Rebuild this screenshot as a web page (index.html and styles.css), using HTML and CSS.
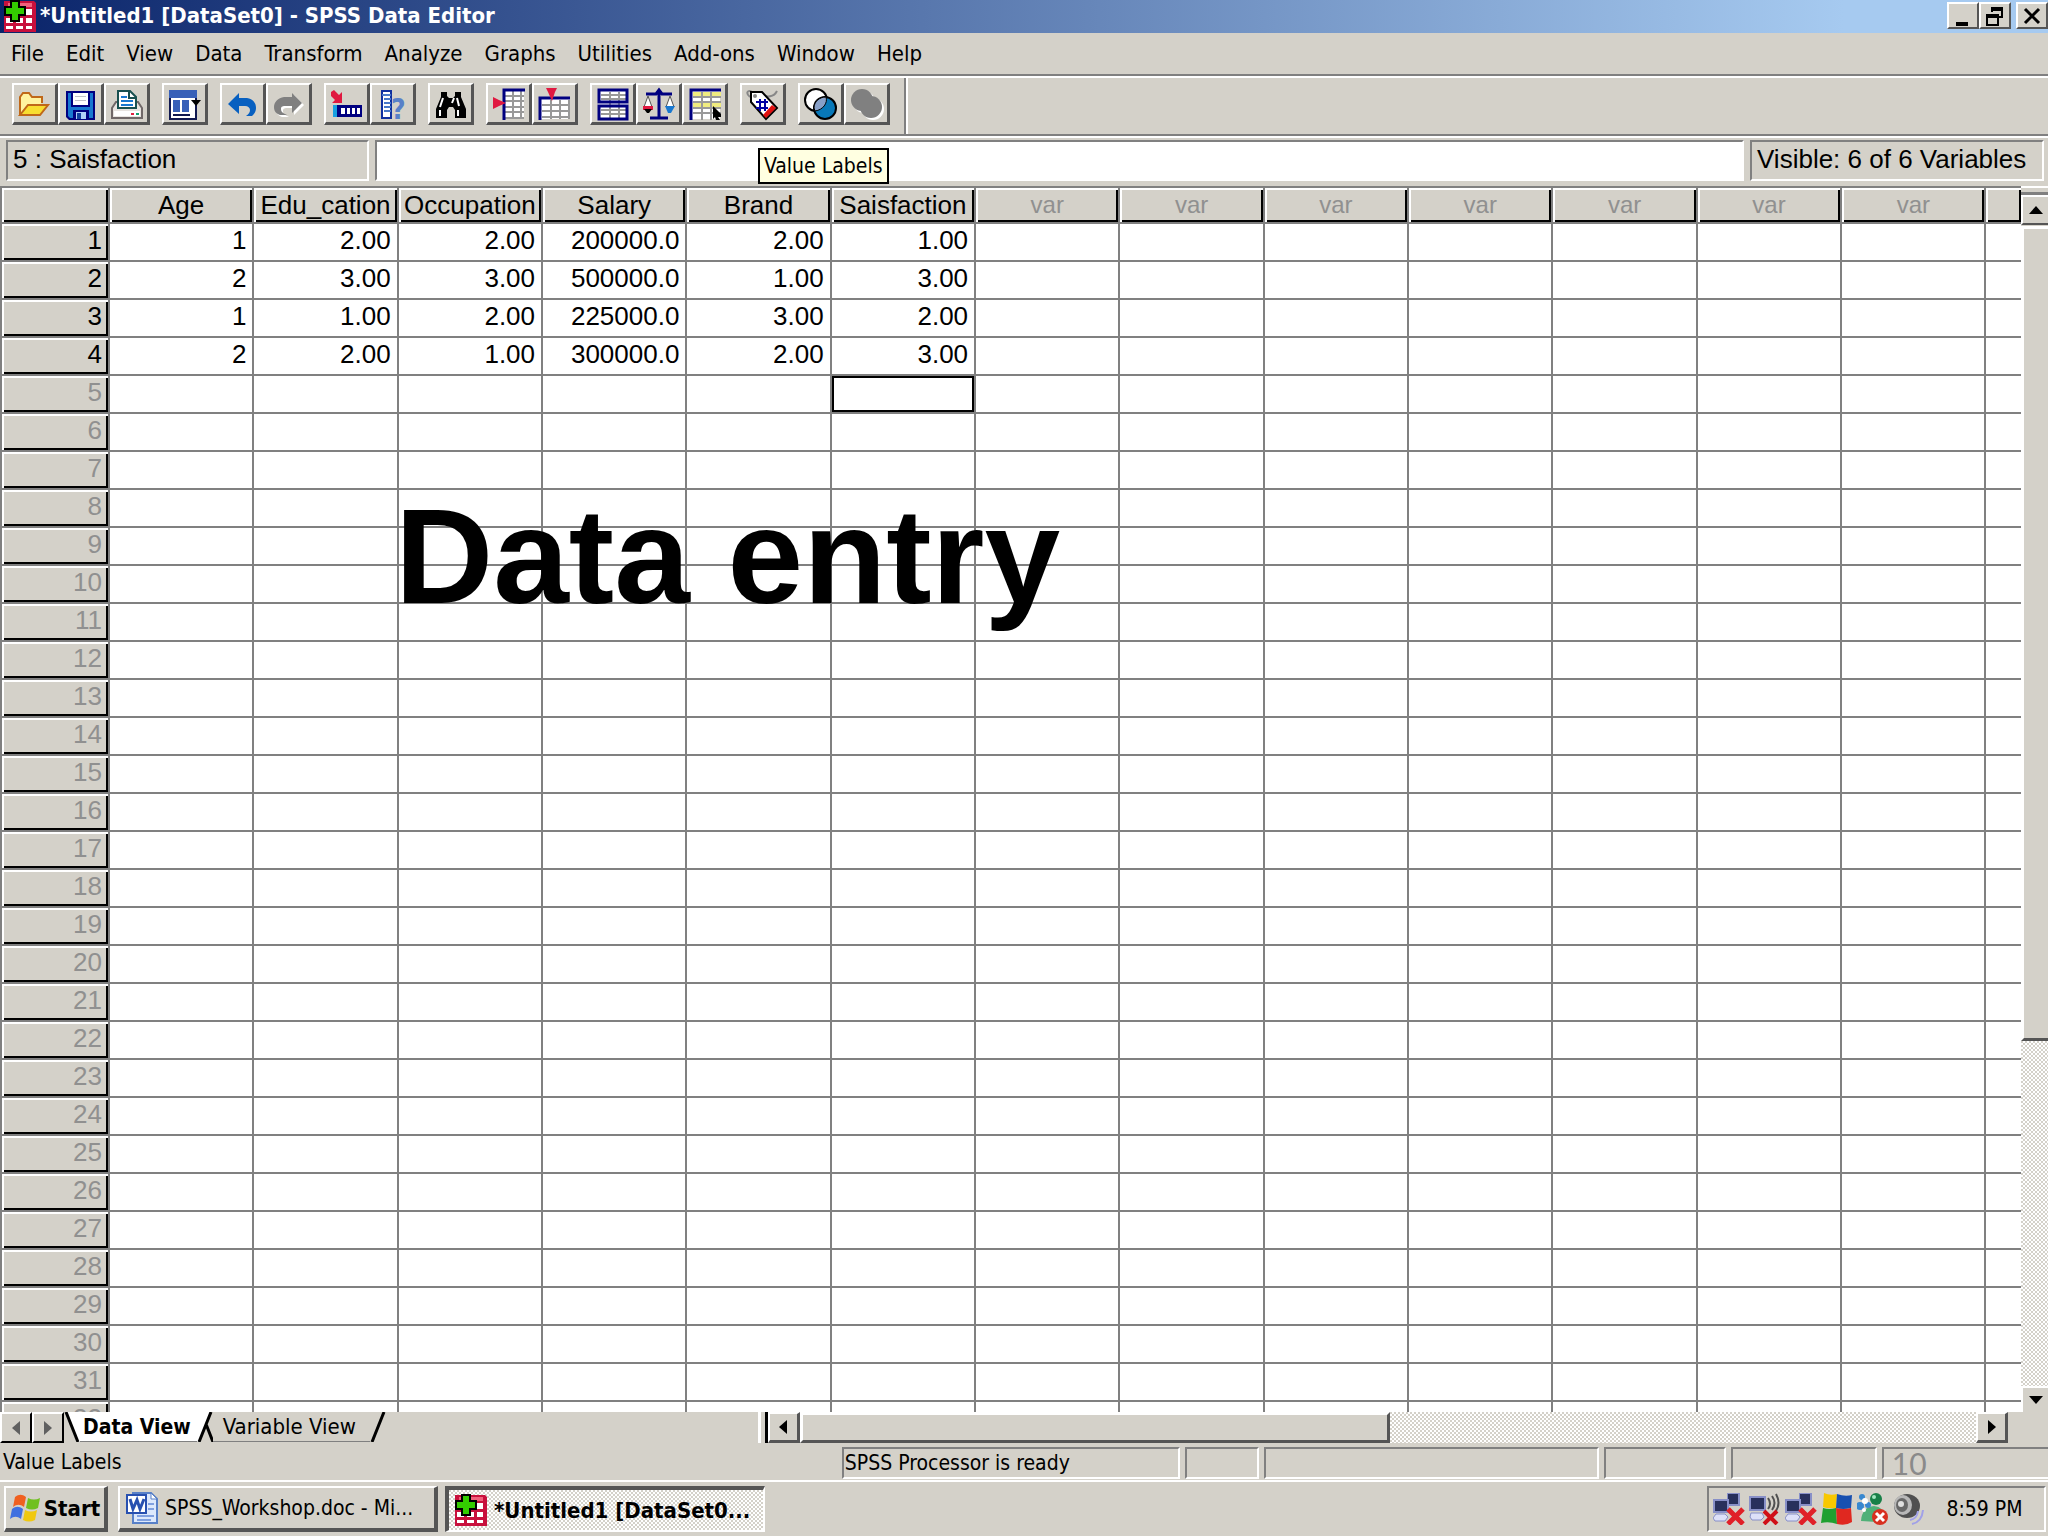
FILE: index.html
```html
<!DOCTYPE html>
<html lang="en">
  <head>
    <title>*Untitled1 [DataSet0] - SPSS Data Editor</title>
    <meta charset="utf-8" />
    <meta name="viewport" content="width=device-width, initial-scale=1.0" />
    <link rel="stylesheet" href="styles.css">
  </head>

  <body>
    <svg class="sprites" width="0" height="0">
      <symbol id="spss" viewBox="0 0 32 32">
        <path fill="#c8103c" d="M0 1h30l2 2v29H0z" />
        <path fill="#f0607c" d="M4 3h24v4H4z" />
        <path fill="#fff" d="M22 9h6v6h-6zM22 18h6v5h-6zM12 18h7v5h-7zM2 18h7v5H2zM2 26h7v3H2zM12 26h7v3h-7zM22 26h6v3h-6z" />
        <path fill="#3c0" stroke="#000" stroke-width="2" d="M7 1h8v6h6v8h-6v6H7v-6H1V7h6z" />
      </symbol>
      <symbol id="net" viewBox="0 0 32 32">
        <path fill="#8890c8" d="M14 0h13v13H14z" />
        <path fill="#28305c" d="M15 1h10v10H15z" />
        <path fill="#8890c8" d="M0 6h16v14H0z" />
        <path fill="#28305c" d="M2 8h12v10H2z" />
        <path fill="#dde0f8" stroke="#8890c8" d="M3 21h9l3 3-3 4H2l-2-3z" />
        <path stroke="#e02028" stroke-width="5" d="M15 16l15 15M30 16L15 31" />
      </symbol>
    </svg>

    <header class="titlebar">
      <svg class="icon"><use href="#spss" /></svg>
      <h1>*Untitled1 [DataSet0] - SPSS Data Editor</h1>
      <div class="window-buttons">
        <button aria-label="Minimize"><svg viewBox="0 0 28 24"><path d="M7 18h12v4H7z" /></svg></button>
        <button aria-label="Restore"><svg viewBox="0 0 28 24"><path fill="none" stroke="#000" stroke-width="2" d="M11 8V4h10v9h-4M10 4h12M10 6h12M6 11h11v10H6zM6 13h11" /></svg></button>
        <button class="close" aria-label="Close"><svg viewBox="0 0 28 24"><path fill="none" stroke="#000" stroke-width="3" d="M7 5l14 14M21 5L7 19" /></svg></button>
      </div>
    </header>

    <nav class="menu">
      <button>File</button>
      <button>Edit</button>
      <button>View</button>
      <button>Data</button>
      <button>Transform</button>
      <button>Analyze</button>
      <button>Graphs</button>
      <button>Utilities</button>
      <button>Add-ons</button>
      <button>Window</button>
      <button>Help</button>
    </nav>

    <div class="toolbar">
      <div class="tools">
        <button aria-label="Open File"><svg viewBox="0 0 32 32"><path fill="#fff3a0" stroke="#c06818" stroke-width="2" d="M1 27V9l3-4h6l3 4h10v6" /><path fill="#f8de30" stroke="#c06818" stroke-width="2" d="M1 27l8-10h20l-8 10z" /></svg></button>
        <button aria-label="Save File"><svg viewBox="0 0 32 32"><path fill="#000080" d="M1 3h29v29H4l-3-3z" /><path fill="#1878d0" d="M3 5h25v25H5l-2-2z" /><path fill="#000080" d="M6 5h19v14H6zM8 22h16v9H8z" /><path fill="#fff" d="M8 5h15v12H8z" /><path fill="#c0c0c8" d="M10 8h11v1H10zM10 12h11v1H10z" /><path fill="#b0d0f8" d="M11 24h10v7H11z" /><path fill="#1040a0" d="M12 25h4v6h-4z" /></svg></button>
        <button aria-label="Print"><svg viewBox="0 0 32 32"><path fill="#e8e4e0" stroke="#706868" stroke-width="2" d="M5 14h22l4 6v10H1V20z" /><path fill="#fff" stroke="#185050" stroke-width="2" d="M7 20V3h12l6 6v11z" /><path fill="none" stroke="#185050" stroke-width="2" d="M18 3v7h7" /><path stroke="#1878d0" stroke-width="2" d="M10 9h6M10 13h12M10 17h12" /><path fill="#fff" d="M3 23h26v5H3z" /><path fill="#e02040" d="M20 25h3v2h-3z" /><path fill="#10a070" d="M25 25h3v2h-3z" /></svg></button>
      </div>
      <div class="tools">
        <button aria-label="Dialog Recall"><svg viewBox="0 0 32 32"><path fill="#fff" stroke="#101850" stroke-width="2" d="M1 4h26v27H1z" /><path fill="#3860b8" d="M0 2h28v8H0zM4 12h7v12H4zM13 12h7v12h-7z" /><path fill="#101850" d="M4 26h17v2H4z" /><path d="M22 12h10l-5 6z" /></svg></button>
      </div>
      <div class="tools">
        <button aria-label="Undo"><svg viewBox="0 0 32 32"><path fill="#0860c0" d="M1 16L12 5v5h8c6 1 9 5 9 10 0 4-2 6-4 8h-6c3-2 4-4 4-6s-2-4-5-4h-6v8z" /></svg></button>
        <button disabled aria-label="Redo"><svg viewBox="0 0 32 32"><path fill="#fff" transform="translate(2 2)" d="M29 15L19 5v4h-8C5 10 1 14 1 19c0 5 3 7 6 8h7c-4-2-6-3-6-6s2-3 5-3h6v7z" /><path fill="#808080" d="M29 15L19 5v4h-8C5 10 1 14 1 19c0 5 3 7 6 8h7c-4-2-6-3-6-6s2-3 5-3h6v7z" /></svg></button>
      </div>
      <div class="tools">
        <button aria-label="Go To Case"><svg viewBox="0 0 32 32"><path fill="#e01840" d="M0 4l3-2 5 5 3-3v11H1l3-3-4-4z" /><path fill="#000080" d="M2 17h29v12H2z" /><path fill="#18a0e0" d="M2 17h4v12H2z" /><path fill="#fff" d="M10 20h4v6h-4zM16 20h3v6h-3zM21 20h3v6h-3zM26 20h3v6h-3z" /></svg></button>
        <button aria-label="Variables"><svg viewBox="0 0 32 32"><path fill="#fff" stroke="#1030a0" stroke-width="2" d="M5 3h9v27H5z" /><path stroke="#4878c8" stroke-width="2" d="M5 7h9M7 11h7M7 15h7M7 19h7M7 23h7" /><text class="mark" x="14" y="31">?</text></svg></button>
      </div>
      <div class="tools">
        <button aria-label="Find"><svg viewBox="0 0 32 32"><path d="M6 4h6v4l2 2h4l2-2V4h6v5l5 12v9H20v-8l-2-3h-4l-2 3v8H1v-9L6 9z" /><path stroke="#fff" stroke-width="2" d="M8 10l-3 9M5 22v6M19 10l-2 5M22 10l2 8M23 22v6" /></svg></button>
      </div>
      <div class="tools">
        <button aria-label="Insert Case"><svg viewBox="0 0 32 32"><path fill="#fff" d="M10 2h21v29H10z" /><path fill="none" stroke="#999" stroke-width="2" d="M12 8h19M12 13h19M12 19h19M12 24h19M12 30h19M20 3v28M28 3v28" /><path fill="none" stroke="#000080" stroke-width="3" d="M11 32V2h21" /><path fill="#e01840" d="M0 9l6 3 7 3-7 3-6 3z" /></svg></button>
        <button aria-label="Insert Variable"><svg viewBox="0 0 32 32"><path fill="#fff" d="M1 10h30v21H1z" /><path fill="none" stroke="#999" stroke-width="2" d="M3 17h28M3 23h28M3 29h28M12 12v19M21 12v19M30 12v19" /><path fill="none" stroke="#000080" stroke-width="3" d="M1 32V10h30" /><path fill="#e01840" d="M7 0h11l-2 4-3 9-4-9z" /></svg></button>
      </div>
      <div class="tools">
        <button aria-label="Split File"><svg viewBox="0 0 32 32"><path fill="#fff" d="M1 2h30v29H1z" /><path fill="none" stroke="#999" stroke-width="2" d="M4 7h26M4 11h26M4 22h26M4 26h26M13 4v26M22 4v26" /><path fill="none" stroke="#000080" stroke-width="3" d="M2 2h28v12H2zM2 18h28v13H2z" /></svg></button>
        <button aria-label="Weight Cases"><svg viewBox="0 0 32 32"><path fill="none" stroke="#000080" stroke-width="3" d="M3 6h10l3-4 3 4h10M16 3v26M7 30h18" /><path fill="#fff" stroke="#555" stroke-width="1" d="M5 8L1 19h8zM27 8l-4 11h8z" /><path fill="#e01840" d="M0 18h10v4H0z" /><path d="M1 21h8l-3 4H4z" /><path fill="#1878d0" d="M22 18h10l-4 7h-3z" /></svg></button>
        <button aria-label="Select Cases"><svg viewBox="0 0 32 32"><path fill="#fff" d="M1 2h30v29H1z" /><path fill="#f0ec80" d="M4 4h28v5H4zM4 15h28v5H4z" /><path fill="none" stroke="#999" stroke-width="2" d="M4 9h28M4 14h28M4 20h28M4 25h28M13 4v28M22 4v28" /><path fill="none" stroke="#000080" stroke-width="3" d="M2 32V2h30" /><path d="M24 18l8 8v3h-3l2 3h-4l-1-3-2 2z" /></svg></button>
      </div>
      <div class="tools">
        <button aria-label="Value Labels"><svg viewBox="0 0 32 32"><path fill="none" stroke="#888" stroke-width="2" d="M5 4C1 1-2 5 3 9M14 6c6 4 13 3 16-3" /><path fill="#fff" stroke="#000" stroke-width="2" d="M4 4h11l15 16-11 11L4 14z" /><path fill="#e01010" d="M16 27l9-10 4 3-10 10z" /><circle cx="8" cy="8" r="2" fill="#888" /><path stroke="#0000a0" stroke-width="2" d="M13 11v12M18 11v12M9 14h12M9 20h12" /></svg></button>
        <div class="tooltip" role="tooltip">Value Labels</div>
      </div>
      <div class="tools">
        <button aria-label="Use Sets"><svg viewBox="0 0 32 32"><circle cx="11" cy="12" r="11" fill="#fff" stroke="#000" stroke-width="2" /><circle cx="20" cy="20" r="11" fill="#0878b8" stroke="#000" stroke-width="2" /><path fill="#88a0c8" stroke="#000" d="M9 20c0-6 5-11 12-11 2 6-3 13-11 14z" /></svg></button>
        <button disabled aria-label="Show All Variables"><svg viewBox="0 0 32 32"><g fill="#fff"><circle cx="13" cy="14" r="11" /><circle cx="22" cy="21" r="11" /></g><g fill="#808080"><circle cx="11" cy="12" r="11" /><circle cx="20" cy="19" r="11" /></g></svg></button>
      </div>
      <div class="separator"></div>
    </div>

    <div class="cellbar">
      <label class="cell-name" for="cellValue">5 : Saisfaction</label>
      <input type="text" id="cellValue" />
      <div class="visible">Visible: 6 of 6 Variables</div>
    </div>

    <main class="workspace">
      <div class="grid">
        <table>
          <thead>
            <tr id="columns"></tr>
          </thead>
          <tbody id="cases"></tbody>
        </table>
        <div class="caption">Data entry</div>
      </div>
      <div class="vscroll">
        <div class="splitter"></div>
        <button aria-label="Scroll up"><svg viewBox="0 0 16 10"><path d="M8 1l7 8H1z" /></svg></button>
        <div class="thumb"></div>
        <div class="track"></div>
        <button class="down" aria-label="Scroll down"><svg viewBox="0 0 16 10"><path d="M8 9l7-8H1z" /></svg></button>
      </div>
    </main>

    <div class="views">
      <div class="tabs">
        <button class="arrow" aria-label="Previous view"><svg viewBox="0 0 10 16"><path fill="#606060" d="M1 8l8-7v14z" /></svg></button>
        <button class="arrow" aria-label="Next view"><svg viewBox="0 0 10 16"><path fill="#606060" d="M9 8L1 1v14z" /></svg></button>
        <svg class="edge" viewBox="0 0 16 30"><path fill="#fff" d="M2 0h14v30h-2z" /><path stroke="#000" stroke-width="3" d="M2 0l12 30" /></svg>
        <button class="tab active">Data View</button>
        <svg class="edge" viewBox="0 0 16 30"><path fill="#fff" d="M0 0h14L2 30H0z" /><path stroke="#000" stroke-width="3" d="M14 0L2 30M9 12l7 18" /></svg>
        <button class="tab">Variable View</button>
        <svg class="edge" viewBox="0 0 16 30"><path stroke="#000" stroke-width="3" d="M14 0L2 30" /></svg>
      </div>
      <div class="hscroll">
        <div class="splitter"></div>
        <button aria-label="Scroll left"><svg viewBox="0 0 10 16"><path d="M1 8l8-7v14z" /></svg></button>
        <div class="thumb"></div>
        <div class="track"></div>
        <button aria-label="Scroll right"><svg viewBox="0 0 10 16"><path d="M9 8L1 1v14z" /></svg></button>
      </div>
    </div>

    <div class="status">
      <div>Value Labels</div>
      <div class="panel">SPSS Processor is ready</div>
      <div class="panel"></div>
      <div class="panel"></div>
      <div class="panel"></div>
      <div class="panel"></div>
      <div class="panel page-number">10</div>
    </div>

    <footer class="taskbar">
      <button class="start">
        <svg class="icon" viewBox="0 0 32 32"><path fill="#f06020" d="M5 5c4-3 7-3 11 0l-2 10c-4-3-7-3-11 0z" /><path fill="#70c020" d="M18 6c4 2 8 2 12 0l-2 10c-4 2-8 2-12 0z" /><path fill="#4070e0" d="M2 17c4-3 7-3 11 0l-2 10c-4-3-7-3-11 0z" /><path fill="#f0c810" d="M15 18c4 2 8 2 12 0l-2 10c-4 2-8 2-12 0z" /></svg>
        Start
      </button>
      <button class="task">
        <svg class="icon" viewBox="0 0 32 32"><path fill="#dce8fc" stroke="#5880c8" stroke-width="2" d="M7 1h18l6 6v24H7z" /><path fill="#fff" stroke="#5880c8" d="M25 1v6h6z" /><path stroke="#80a0e0" stroke-width="2" d="M22 12h6M22 17h6M11 24h17M11 28h14" /><path fill="#fff" stroke="#2850b0" stroke-width="2" d="M1 3h19v18H1z" /><path fill="none" stroke="#2850b0" stroke-width="3" d="M4 7l3 10 4-9 3 9 4-10" /></svg>
        <span>SPSS_Workshop.doc - Mi...</span>
      </button>
      <button class="task current">
        <svg class="icon"><use href="#spss" /></svg>
        <span>*Untitled1 [DataSet0...</span>
      </button>
      <div class="tray">
        <svg class="icon"><use href="#net" /></svg>
        <svg class="icon" viewBox="0 0 32 32"><path fill="#8890c8" d="M0 3h17v15H0z" /><path fill="#28305c" d="M2 5h13v11H2z" /><path fill="#dde0f8" stroke="#8890c8" d="M2 20h11l2 4-3 3H3l-2-3z" /><path fill="none" stroke="#505050" stroke-width="2" d="M19 5q4 6 0 11M23 3q5 7 0 14M27 1q5 9 0 17" /><path stroke="#d01018" stroke-width="4" d="M15 18l13 13M28 18L15 31" /></svg>
        <svg class="icon"><use href="#net" /></svg>
        <svg class="icon" viewBox="0 0 32 32"><path fill="#f8c800" d="M3 0q6 3 13 1l-1 14q-8 1-13-1z" /><path fill="#1850b0" d="M16 1q8 3 15 1l-1 13q-8 2-15 0z" /><path fill="#20a030" d="M2 15q6 2 13 0l1 16q-8-3-16-1z" /><path fill="#e02820" d="M15 15q8 2 15 0l1 14q-6 4-15 2z" /></svg>
        <svg class="icon" viewBox="0 0 32 32"><circle cx="19" cy="6" r="6" fill="#188048" /><circle cx="17" cy="4" r="2" fill="#a0e8c0" /><path fill="#50b078" d="M4 28q1-14 13-15 10 1 11 11l-8 5z" /><g fill="#3888d0"><circle cx="5" cy="4" r="3" /><circle cx="3" cy="13" r="4" /><circle cx="11" cy="12" r="3" /></g><g fill="#fff"><circle cx="8" cy="8" r="3" /><circle cx="7" cy="17" r="2" /></g><circle cx="23" cy="24" r="8" fill="#d83020" /><path stroke="#fff" stroke-width="3" d="M19 20l8 8M27 20l-8 8" /></svg>
        <svg class="icon" viewBox="0 0 32 32"><ellipse cx="14" cy="13" rx="13" ry="12" fill="#505050" /><ellipse cx="10" cy="12" rx="9" ry="10" fill="#b8b8b8" /><ellipse cx="9" cy="12" rx="6" ry="7" fill="#686868" /><circle cx="8" cy="11" r="3" fill="#e0e0e0" /><path fill="none" stroke="#a0a0e8" stroke-width="2" d="M17 27q7-1 8-9M19 31q10-2 11-14" /></svg>
        <time>8:59 PM</time>
      </div>
    </footer>

    <script>
      const variables = ["Age", "Edu_cation", "Occupation", "Salary", "Brand", "Saisfaction"];
      const cases = [
        ["1", "2.00", "2.00", "200000.0", "2.00", "1.00"],
        ["2", "3.00", "3.00", "500000.0", "1.00", "3.00"],
        ["1", "1.00", "2.00", "225000.0", "3.00", "2.00"],
        ["2", "2.00", "1.00", "300000.0", "2.00", "3.00"],
      ];
      const columnCount = 13;
      const rowCount = 32;

      function addCell(row, tag, text, className) {
        const cell = document.createElement(tag);
        cell.textContent = text;
        if (className) {
          cell.className = className;
        }
        row.appendChild(cell);
      }

      const head = document.getElementById("columns");
      addCell(head, "th", "", "corner");
      for (let i = 0; i < columnCount; i++) {
        addCell(head, "th", variables[i] || "var", variables[i] ? "" : "unused");
      }
      addCell(head, "th", "", "rest");

      for (let r = 0; r < rowCount; r++) {
        const row = document.createElement("tr");
        addCell(row, "th", r + 1, cases[r] ? "" : "unused");
        for (let c = 0; c <= columnCount; c++) {
          const text = cases[r] && cases[r][c] ? cases[r][c] : "";
          addCell(row, "td", text, r === 4 && c === 5 ? "selected" : "");
        }
        document.getElementById("cases").appendChild(row);
      }
    </script>
  </body>
</html>
```
FILE: styles.css
```css
* {
  box-sizing: border-box;
}

body {
  margin: 0;
  height: 100vh;
  display: flex;
  flex-direction: column;
  overflow: hidden;
  background-color: #d4d1c9;
  color: #000;
  font-family: "DejaVu Sans Condensed", "DejaVu Sans", sans-serif;
  font-size: 21px;
}

button {
  display: flex;
  align-items: center;
  justify-content: center;
  padding: 0;
  border: 2px solid;
  border-color: #fff #555 #555 #fff;
  background-color: #d4d1c9;
  color: #000;
  font: inherit;
}

.sprites {
  position: absolute;
}

.icon {
  width: 32px;
  height: 32px;
  flex: none;
}

/* title bar */
.titlebar {
  display: flex;
  align-items: center;
  height: 33px;
  flex: none;
  padding: 0 0 2px 4px;
  gap: 4px;
  background: linear-gradient(to right, #0a246a, #a6caf0 90%);
  color: #fff;
}

.titlebar h1 {
  flex: 1;
  margin: 0;
  font-size: 22px;
  line-height: 31px;
}

.window-buttons {
  display: flex;
}

.window-buttons button {
  width: 32px;
  height: 27px;
}

.window-buttons svg {
  width: 28px;
  height: 24px;
}

.window-buttons .close {
  margin-left: 5px;
}

/* menu and toolbar */
.menu {
  display: flex;
  height: 43px;
  flex: none;
  border-bottom: 2px solid #808080;
  font-size: 22px;
}

.menu button {
  padding: 0 11px;
  border: none;
}

.toolbar {
  display: flex;
  gap: 12px;
  height: 60px;
  flex: none;
  padding: 5px 12px;
  border-top: 2px solid #fff;
  border-bottom: 2px solid #808080;
}

.tools {
  display: flex;
  position: relative;
}

.tools button {
  width: 46px;
  height: 42px;
  border-width: 2px 3px 3px 2px;
}

.tools button svg {
  width: 32px;
  height: 32px;
  overflow: visible;
}

.mark {
  fill: #5880c8;
  font-size: 28px;
  font-weight: bold;
}

.separator {
  margin: -5px 0 -5px 2px;
  width: 4px;
  border-left: 2px solid #808080;
  border-right: 2px solid #fff;
}

.tooltip {
  position: absolute;
  top: 65px;
  left: 18px;
  z-index: 2;
  padding: 2px 4px;
  border: 2px solid #000;
  background-color: #ffffe1;
  line-height: 28px;
  white-space: nowrap;
}

/* current cell */
.cellbar {
  display: flex;
  gap: 6px;
  height: 50px;
  flex: none;
  padding: 2px 4px 5px 6px;
  border-top: 2px solid #fff;
  font-family: "Liberation Sans", Arial, sans-serif;
  font-size: 26px;
  line-height: 34px;
}

.cell-name,
.visible {
  border: 2px solid;
  border-color: #808080 #fff #fff #808080;
  padding: 0 5px;
}

.cell-name {
  width: 363px;
}

.visible {
  width: 294px;
  white-space: nowrap;
}

.cellbar input {
  flex: 1;
  min-width: 0;
  border: 2px solid;
  border-color: #808080 #fff #fff #808080;
  background-color: #fff;
  font: inherit;
}

/* data grid */
.workspace {
  display: flex;
  flex: 1;
  min-height: 0;
}

.grid {
  position: relative;
  flex: 1;
  overflow: hidden;
  border-top: 2px solid #808080;
  border-left: 2px solid #808080;
  background-color: #fff;
}

table {
  width: 100%;
  table-layout: fixed;
  border-collapse: separate;
  border-spacing: 0;
  font-family: "Liberation Sans", Arial, sans-serif;
  font-size: 26px;
  line-height: 30px;
}

th,
td {
  height: 38px;
  padding: 0 6px 4px 0;
  border-right: 2px solid #808080;
  border-bottom: 2px solid #808080;
  text-align: right;
  font-weight: normal;
  white-space: nowrap;
}

th {
  background-color: #d4d1c9;
  box-shadow: inset 2px 2px #fff, inset -2px -2px #000;
}

thead th {
  width: 7.15%;
  height: 36px;
  padding: 0;
  text-align: center;
}

thead .corner {
  width: 108px;
}

thead .rest {
  width: auto;
}

.unused {
  color: #909090;
}

thead .unused {
  font-size: 24px;
}

td:last-child,
th:last-child {
  border-right: none;
}

.selected {
  box-shadow: inset 0 0 0 2px #000;
}

.caption {
  position: absolute;
  top: 300px;
  left: 393px;
  font-family: "Liberation Sans", Arial, sans-serif;
  font-size: 136px;
  font-weight: bold;
  line-height: 1;
  white-space: nowrap;
}

/* scroll bars */
.vscroll {
  display: flex;
  flex-direction: column;
  width: 27px;
}

.vscroll svg {
  width: 16px;
  height: 10px;
}

.vscroll .splitter {
  height: 9px;
  border-top: 2px solid #fff;
  border-bottom: 3px solid #808080;
}

.vscroll button {
  height: 30px;
  border-right: none;
}

.vscroll .thumb {
  flex: 815;
  margin-top: 1px;
}

.vscroll .track {
  flex: 347;
}

.vscroll .down {
  height: 26px;
  border-bottom: none;
}

.thumb {
  border: 3px solid;
  border-color: #fff #555 #555 #fff;
}

.vscroll .thumb {
  border-right: none;
}

.track {
  background: repeating-conic-gradient(#fff 0 25%, #d4d1c9 0 50%) 0 0 / 4px 4px;
}

/* view tabs */
.views {
  display: flex;
  height: 31px;
  flex: none;
}

.tabs {
  display: flex;
  width: 37%;
}

.arrow {
  width: 32px;
  border-color: #fff #000 #000 #fff;
}

.arrow svg,
.hscroll button svg {
  width: 10px;
  height: 16px;
}

.edge {
  width: 16px;
  height: 30px;
}

.tab {
  padding: 0 14px 0 10px;
  height: 30px;
  border: none;
  border-bottom: 1px solid #808080;
  font-size: 22px;
}

.active {
  padding: 0 6px 0 3px;
  background-color: #fff;
  font-size: 21px;
  font-weight: bold;
}

.hscroll {
  display: flex;
  flex: 1;
  padding-right: 40px;
}

.hscroll .splitter {
  width: 10px;
  border-left: 3px solid #fff;
  border-right: 3px solid #000;
}

.hscroll button {
  width: 32px;
  border-width: 2px 3px 3px 2px;
}

.hscroll .thumb {
  flex: 588;
}

.hscroll .track {
  flex: 590;
}

/* status bar */
.status {
  display: grid;
  grid-template-columns: 833fr 338fr 74fr 334fr 122fr 146fr 166fr;
  gap: 5px;
  height: 39px;
  flex: none;
  padding: 4px 0 3px 3px;
  border-bottom: 2px solid #fff;
  line-height: 30px;
}

.panel {
  border: 2px solid;
  border-color: #808080 #fff #fff #808080;
  padding-left: 1px;
  line-height: 28px;
}

.page-number {
  border-right: none;
  padding-left: 8px;
  color: #8a8a8a;
  font-family: Lato, sans-serif;
  font-size: 30px;
}

/* taskbar */
.taskbar {
  display: flex;
  height: 54px;
  flex: none;
  padding: 4px 2px 4px 4px;
}

.taskbar button {
  border-width: 2px 4px 4px 2px;
  white-space: nowrap;
}

.start {
  width: 104px;
  gap: 2px;
  margin-right: 10px;
}

.taskbar .start,
.taskbar .current {
  font-size: 22px;
  font-weight: bold;
}

.task {
  width: 320px;
  gap: 7px;
  margin-right: 7px;
}

.taskbar .task {
  justify-content: flex-start;
  padding-left: 6px;
}

.taskbar .current {
  border-width: 4px 2px 2px 4px;
  border-color: #555 #fff #fff #555;
  background: repeating-conic-gradient(#fff 0 25%, #d4d1c9 0 50%) 0 0 / 4px 4px;
}

.tray {
  display: flex;
  align-items: center;
  gap: 4px;
  width: 339px;
  margin-left: auto;
  padding-left: 4px;
  border: 2px solid;
  border-color: #808080 #fff #fff #808080;
}

.tray time {
  flex: 1;
  padding-right: 4px;
  text-align: center;
}
```
